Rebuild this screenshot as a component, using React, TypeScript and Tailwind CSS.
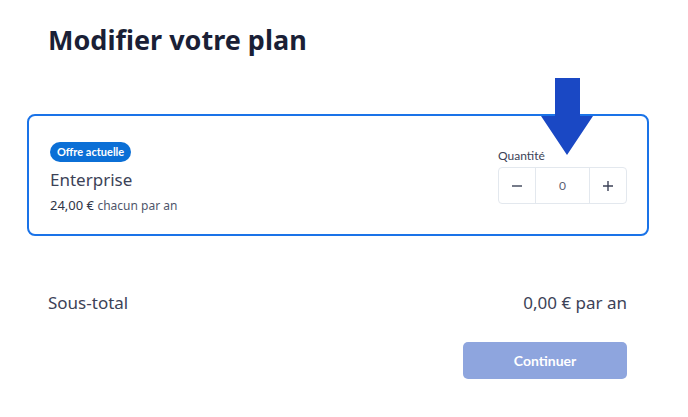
import React, { useState } from "react";

export default function App() {
    const [qty, setQty] = useState(0);

    return (
        <div className="relative w-[688px] h-[417px] bg-white font-['Noto_Sans',sans-serif] text-[#3c4257]">
            <h1 className="pl-[48px] pt-[20px] text-[27px] leading-[40px] font-bold text-[#1a1f36]">
                Modifier votre plan
            </h1>

            <div className="mt-[54px] ml-[27px] w-[622px] h-[122px] border-2 border-[#1a73e8] rounded-[8px] flex justify-between items-start">
                <div className="pl-[21px] pt-[22px]">
                    <span className="inline-block bg-[#0b6fd6] text-white text-[11px] leading-[20px] px-[7px] rounded-full font-bold font-['Lato',sans-serif]">
                        Offre actuelle
                    </span>
                    <div className="mt-[6px] text-[17px] leading-[24px] text-[#3c4257]">
                        Enterprise
                    </div>
                    <div className="mt-[4px] text-[13px] leading-[18px]">
                        <span className="text-[#2f3546]">24,00 €</span>{" "}
                        <span className="text-[12px] text-[#4f566b]">chacun par an</span>
                    </div>
                </div>

                <div className="pr-[20px] pt-[32px] font-['Lato',sans-serif]">
                    <div className="text-[12px] leading-[16px] text-[#3c4257] mb-[3px]">
                        Quantité
                    </div>
                    <div className="flex w-[129px] h-[37px] border border-[#e3e8ee] rounded-[4px]">
                        <button
                            onClick={() => setQty(Math.max(0, qty - 1))}
                            className="w-[37px] flex items-center justify-center border-r border-[#e3e8ee]"
                        >
                            <svg width="12" height="12" viewBox="0 0 12 12">
                                <path d="M1 6h10" stroke="#3c4257" strokeWidth="1.4" />
                            </svg>
                        </button>
                        <div className="w-[54px] flex items-center justify-center text-[12px] text-[#5b6274] border-r border-[#e3e8ee]">
                            {qty}
                        </div>
                        <button
                            onClick={() => setQty(qty + 1)}
                            className="flex-1 flex items-center justify-center"
                        >
                            <svg width="12" height="12" viewBox="0 0 12 12">
                                <path d="M1 6h10M6 1v10" stroke="#3c4257" strokeWidth="1.4" />
                            </svg>
                        </button>
                    </div>
                </div>
            </div>

            <div className="mt-[56px] pl-[48px] pr-[61px] flex justify-between text-[17px] leading-[22px] text-[#3c4257]">
                <span>Sous-total</span>
                <span>{qty * 24},00 € par an</span>
            </div>

            <div className="mt-[28px] pr-[61px] flex justify-end">
                <button className="w-[164px] h-[37px] rounded-[5px] bg-[#8ea5de] text-white text-[14px] font-bold font-['Lato',sans-serif]">
                    Continuer
                </button>
            </div>

            {/* annotation arrow */}
            <svg className="absolute left-[540px] top-[78px]" width="54" height="78" viewBox="0 0 54 78">
                <path d="M15 0h25v38h13L27 77 1 38h14z" fill="#1a48c4" />
            </svg>
        </div>
    );
}
